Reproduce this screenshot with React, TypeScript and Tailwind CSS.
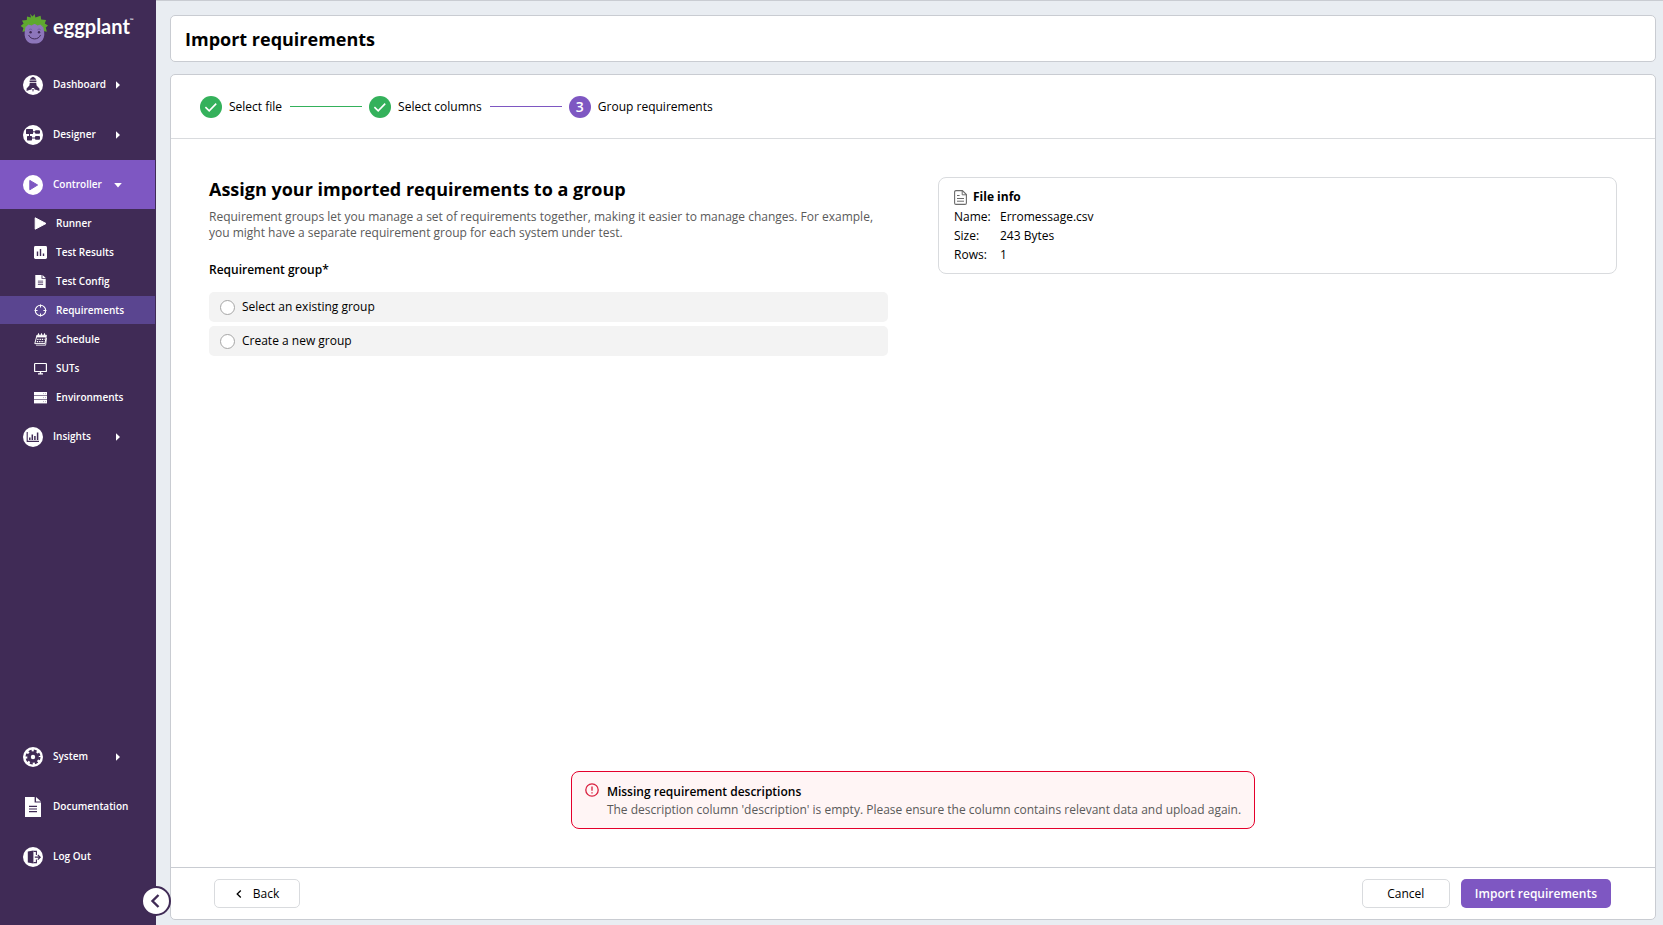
import { useState, type ReactNode } from "react";

interface IPropsIcon {
  className?: string;
}

interface INavItem {
  label: string;
  icon: ReactNode;
  arrow?: boolean;
}

interface IPropsStep {
  label: string;
  children: ReactNode;
  color: string;
}

function Logo() {
  return (
    <svg viewBox="0 0 28 31" className="h-[31px] w-7" aria-hidden="true">
      <path
        d="M10 0.8 L12.6 3.4 L14.6 1 L15.4 4.4 L20.6 2.8 L21.2 6.6 L26 7 L24.8 10.6 L28 12.4 L25.8 14.6 L26.8 18.8 L23.2 18 L14 11 L5.6 18 L2.4 19 L3.4 15 L0.7 13 L3.6 10.6 L2 7.4 L6.8 7 L7 3.6 L11 4.6 Z"
        fill="#5fa82f"
      />
      <path d="M5.2 16 C5.2 12 8 10.4 11 10.8 C13 11 16 11 18 10.8 C21 10.4 23.6 12 23.6 16 C24.8 20 24.6 24 22.6 27 C20.6 30 17.6 30.6 14.4 30.6 C11 30.6 8 30 6.2 27 C4.4 24 4.2 20 5.2 16 Z" fill="#8d76bb" />
      <path d="M5.4 14.6 L7 9.4 H21.6 L23.4 14.6 L20.4 11.6 L17.6 12.6 L14.6 10.8 L11.6 12.6 L8.4 11.4 Z" fill="#5fa82f" />
      <path d="M8.8 17 C9.6 15.8 11.4 15.8 12.2 17 M17.4 17 C18.2 15.8 20 15.8 20.8 17" fill="none" stroke="#6a539c" strokeWidth="0.8" />
      <circle cx="10.6" cy="19.2" r="1.2" fill="#402b56" />
      <circle cx="19" cy="19.2" r="1.2" fill="#402b56" />
      <path d="M8.8 22.4 C10.8 27.2 18.4 27.2 20.4 22.4" fill="none" stroke="#402b56" strokeWidth="1" strokeLinecap="round" />
    </svg>
  );
}

function DashboardIcon() {
  return (
    <svg viewBox="0 0 20 20" className="size-5" aria-hidden="true">
      <circle cx="10" cy="10" r="10" fill="#fff" />
      <path d="M10 1.8 C8.6 2.5 7.2 3.6 6.8 4.8 H13.2 C12.8 3.6 11.4 2.5 10 1.8 Z M6.6 5.6 H13.4 V7 H6.6 Z M6.8 7.8 H13.2 L13.6 10.4 L16.4 13.6 V16 L13 14.8 H11.8 L11 13 H9 L8.2 14.8 H7 L3.6 16 V13.6 L6.4 10.4 Z" fill="#402b56" />
      <path d="M9.3 14 H10.7 L10.4 16.6 H9.6 Z" fill="#402b56" />
    </svg>
  );
}

function DesignerIcon() {
  return (
    <svg viewBox="0 0 20 20" className="size-5" aria-hidden="true">
      <circle cx="10" cy="10" r="10" fill="#fff" />
      <path d="M6.5 8 V12 M9 6.8 H12 M9 13 H12" stroke="#402b56" strokeWidth="1" />
      <g fill="#402b56">
        <rect x="3" y="4" width="7" height="5" rx="0.6" />
        <rect x="12" y="5.2" width="5" height="3.6" rx="1" />
        <rect x="4" y="11" width="5" height="4.4" rx="0.6" />
        <rect x="12" y="11" width="5" height="3.8" rx="1" />
      </g>
    </svg>
  );
}

function ControllerIcon() {
  return (
    <svg viewBox="0 0 20 20" className="size-5" aria-hidden="true">
      <circle cx="10" cy="10" r="10" fill="#fff" />
      <path d="M6.8 5.4 L14.6 10 L6.8 14.8 Z" fill="#7e57c2" stroke="#7e57c2" strokeLinejoin="round" />
    </svg>
  );
}

function InsightsIcon() {
  return (
    <svg viewBox="0 0 20 20" className="size-5" aria-hidden="true">
      <circle cx="10" cy="10" r="10" fill="#fff" />
      <path d="M4.2 5 V14.4 H16" fill="none" stroke="#402b56" strokeWidth="1.1" />
      <path d="M6.8 13 V10.4 M9.3 13 V7.6 M11.9 13 V9 M14.6 13 V5.6" stroke="#402b56" strokeWidth="1.5" />
    </svg>
  );
}

function SystemIcon() {
  return (
    <svg viewBox="0 0 20 20" className="size-5" aria-hidden="true">
      <circle cx="10" cy="10" r="10" fill="#fff" />
      <circle cx="10" cy="10" r="5.8" fill="#402b56" />
      <circle cx="10" cy="10" r="6.4" fill="none" stroke="#402b56" strokeWidth="2.2" strokeDasharray="2.9 2.13" />
      <circle cx="10" cy="10" r="2.2" fill="#fff" />
    </svg>
  );
}

function DocumentIcon({ className }: IPropsIcon) {
  return (
    <svg viewBox="0 0 16 20" className={className} aria-hidden="true">
      <path d="M0 0 H9.6 V5.6 H16 V20 H0 Z" fill="#fff" />
      <path d="M11 0 L16 4.6 H11 Z" fill="#fff" />
      <path d="M4 9.4 H12 M4 12 H12 M4 14.6 H12" stroke="#402b56" strokeWidth="1.2" />
    </svg>
  );
}

function LogOutIcon() {
  return (
    <svg viewBox="0 0 20 20" className="size-5" aria-hidden="true">
      <circle cx="10" cy="10" r="10" fill="#fff" />
      <path d="M4.8 4.4 L10.4 3.6 V16.6 L4.8 15.6 Z" fill="#402b56" />
      <path d="M10.4 4.4 H13.4 V8 M13.4 12.4 V15.6 H10.4" fill="none" stroke="#402b56" strokeWidth="1.1" />
      <path d="M11.8 10.2 H16.8 M14.8 7.8 L17.2 10.2 L14.8 12.6" fill="none" stroke="#402b56" strokeWidth="1.2" />
    </svg>
  );
}

function RunnerIcon() {
  return (
    <svg viewBox="0 0 13 13" className="size-[13px]" aria-hidden="true">
      <path d="M1.2 0.8 L12 6.5 L1.2 12.2 Z" fill="#fff" stroke="#fff" strokeLinejoin="round" />
    </svg>
  );
}

function ResultsIcon() {
  return (
    <svg viewBox="0 0 13 13" className="size-[13px]" aria-hidden="true">
      <rect width="13" height="13" rx="1.4" fill="#fff" />
      <path d="M3.5 10 V5.4 M6.5 10 V3 M9.5 10 V7.6" stroke="#402b56" strokeWidth="1.4" />
    </svg>
  );
}

function RequirementsIcon() {
  return (
    <svg viewBox="0 0 13 13" className="size-[13px]" fill="none" stroke="#fff" aria-hidden="true">
      <circle cx="6.5" cy="6.5" r="5.2" strokeWidth="1.1" />
      <path d="M6.5 0.6 V3.6 M6.5 9.4 V12.4 M0.6 6.5 H3.6 M9.4 6.5 H12.4" strokeWidth="1.1" />
    </svg>
  );
}

function ScheduleIcon() {
  return (
    <svg viewBox="0 0 13 13" className="size-[13px]" fill="none" stroke="#fff" aria-hidden="true">
      <path d="M3 2.2 H12.4 L11 10.6 H0.8 Z" strokeWidth="1" />
      <path d="M2.6 3.4 H12" strokeWidth="2" />
      <path d="M4.5 0.3 V2.4 M7.5 0.3 V2.4 M10.5 0.3 V2.4" strokeWidth="1" />
      <path d="M3.2 6.4 H10.6 M2.8 8.6 H10.2" strokeWidth="1.2" strokeDasharray="1.4 0.9" />
      <path d="M2 12.2 H11.6 L12.6 5" strokeWidth="0.8" />
    </svg>
  );
}

function SutsIcon() {
  return (
    <svg viewBox="0 0 13 13" className="size-[13px]" fill="none" stroke="#fff" aria-hidden="true">
      <rect x="0.6" y="1.5" width="11.8" height="8" rx="0.6" strokeWidth="1.2" />
      <path d="M4 11.9 H9 M6.5 9.5 V12" strokeWidth="1.4" />
    </svg>
  );
}

function EnvironmentsIcon() {
  return (
    <svg viewBox="0 0 13 13" className="size-[13px]" fill="#fff" aria-hidden="true">
      <rect y="1" width="13" height="3.4" />
      <rect y="5" width="13" height="3.4" />
      <rect y="9" width="13" height="3.4" />
      <path d="M9 2.6 H9.6 M11 2.6 H11.6 M9 6.6 H9.6 M11 6.6 H11.6 M9 10.6 H9.6 M11 10.6 H11.6" stroke="#402b56" strokeWidth="0.6" />
    </svg>
  );
}

function FileIcon() {
  return (
    <svg viewBox="0 0 13 15" className="h-[15px] w-[13px]" fill="none" stroke="#6b6b6b" aria-hidden="true">
      <path d="M8.4 0.6 H2 C1.2 0.6 0.6 1.2 0.6 2 V13 C0.6 13.8 1.2 14.4 2 14.4 H11 C11.8 14.4 12.4 13.8 12.4 13 V4.6 Z" strokeWidth="1.1" />
      <path d="M8.2 0.8 V4.8 H12.2" strokeWidth="1" />
      <path d="M3 5.5 H5.6 M3 8.5 H10 M3 11.2 H10" strokeWidth="1" />
    </svg>
  );
}

function CheckCircle() {
  return (
    <svg viewBox="0 0 22 22" className="size-[22px]" aria-hidden="true">
      <circle cx="11" cy="11" r="11" fill="#34b15b" />
      <path d="M5.4 11.2 L9.2 14.8 L16.2 7.6" fill="none" stroke="#fff" strokeWidth="1.6" />
    </svg>
  );
}

const subItems: INavItem[] = [
  { label: "Runner", icon: <RunnerIcon /> },
  { label: "Test Results", icon: <ResultsIcon /> },
  { label: "Test Config", icon: <DocumentIcon className="h-[13px] w-[11px]" /> },
  { label: "Requirements", icon: <RequirementsIcon /> },
  { label: "Schedule", icon: <ScheduleIcon /> },
  { label: "SUTs", icon: <SutsIcon /> },
  { label: "Environments", icon: <EnvironmentsIcon /> },
];

const bottomItems: INavItem[] = [
  { label: "System", icon: <SystemIcon />, arrow: true },
  { label: "Documentation", icon: <DocumentIcon className="h-5 w-4" /> },
  { label: "Log Out", icon: <LogOutIcon /> },
];

function NavLink({ item, active }: { item: INavItem; active?: boolean }) {
  return (
    <a
      href="#"
      className={`flex h-[49px] items-center pl-[23px] text-[10px] font-semibold ${active ? "bg-[#7e57c2]" : ""}`}
    >
      <span className="flex w-5 justify-center">{item.icon}</span>
      <span className={`ml-[10px] ${item.arrow ? "w-[61px]" : ""}`}>{item.label}</span>
      {item.arrow && (
        <svg viewBox="0 0 8 8" className="size-2" fill="#fff" aria-hidden="true">
          {active ? <path d="M0.2 2 H7.8 L4 6.4 Z" /> : <path d="M2 0.2 V7.8 L6 4 Z" />}
        </svg>
      )}
    </a>
  );
}

function Sidebar() {
  return (
    <aside className="relative flex w-[156px] shrink-0 flex-col bg-[#402b56] text-white">
      <a href="#" className="flex h-[60px] items-start gap-[5px] pt-[13px] pl-5">
        <Logo />
        <span className="flex font-[Lato] text-[20px] leading-[26px] font-bold">
          eggplant
          <span className="text-[5px] leading-[14px]">™</span>
        </span>
      </a>
      <nav className="flex grow flex-col justify-between pb-11">
        <ul className="flex flex-col gap-px">
          <li>
            <NavLink item={{ label: "Dashboard", icon: <DashboardIcon />, arrow: true }} />
          </li>
          <li>
            <NavLink item={{ label: "Designer", icon: <DesignerIcon />, arrow: true }} />
          </li>
          <li className="pr-px">
            <NavLink item={{ label: "Controller", icon: <ControllerIcon />, arrow: true }} active />
            <ul className="flex flex-col gap-px">
              {subItems.map((item) => (
                <li key={item.label}>
                  <a
                    href="#"
                    className={`flex h-7 items-center gap-[9px] pl-[34px] text-[10px] font-semibold ${item.label === "Requirements" ? "bg-[#5a4590]" : ""}`}
                  >
                    <span className="flex w-[13px] justify-center">{item.icon}</span>
                    {item.label}
                  </a>
                </li>
              ))}
            </ul>
          </li>
          <li>
            <NavLink item={{ label: "Insights", icon: <InsightsIcon />, arrow: true }} />
          </li>
        </ul>
        <ul className="flex flex-col gap-px">
          {bottomItems.map((item) => (
            <li key={item.label}>
              <NavLink item={item} />
            </li>
          ))}
        </ul>
      </nav>
      <button
        aria-label="Collapse menu"
        className="absolute -right-[15px] bottom-[9px] flex size-[30px] cursor-pointer items-center justify-center rounded-full border-2 border-[#402b56] bg-white"
      >
        <svg viewBox="0 0 14 14" className="size-[14px]" fill="none" stroke="#402b56" strokeWidth="2.4" aria-hidden="true">
          <path d="M9.5 1 L3.5 7 L9.5 13" />
        </svg>
      </button>
    </aside>
  );
}

function Step({ label, children, color }: IPropsStep) {
  return (
    <li className="flex items-center gap-[7px]">
      {color && <span className={`h-px w-[72px] ${color}`} />}
      {children}
      <span>{label}</span>
    </li>
  );
}

export default function App() {
  const [group, setGroup] = useState<string>("");

  return (
    <div className="flex min-h-screen bg-[#e9edf2] font-['Open_Sans',sans-serif] text-[12px] text-black">
      <Sidebar />
      <main className="flex min-w-0 grow flex-col gap-3 border-t border-[#c9ccd2] pt-[14px] pr-[7px] pb-[5px] pl-[14px]">
        <header className="rounded-[5px] border border-[#c9ccd2] bg-white px-[14px] pt-[11px] pb-[10px]">
          <h1 className="text-[18px] leading-6 font-bold">Import requirements</h1>
        </header>

        <section className="flex grow flex-col rounded-[5px] border border-[#c9ccd2] bg-white">
          <ol className="flex h-16 items-center gap-2 border-b border-[#d9dbde] px-[29px]">
            <Step label="Select file" color="">
              <CheckCircle />
            </Step>
            <Step label="Select columns" color="bg-[#34b15b]">
              <CheckCircle />
            </Step>
            <Step label="Group requirements" color="bg-[#7e57c2]">
              <span className="flex size-[22px] items-center justify-center rounded-full bg-[#7e57c2] text-[14px] font-semibold text-white">
                3
              </span>
            </Step>
          </ol>

          <div className="grid grid-cols-2 items-start gap-[50px] px-[38px] pt-[38px]">
            <div>
              <h2 className="text-[18px] leading-6 font-bold">Assign your imported requirements to a group</h2>
              <p className="mt-2 leading-4 text-[#5a5a5a]">
                Requirement groups let you manage a set of requirements together, making it easier to manage changes.
                For example, you might have a separate requirement group for each system under test.
              </p>
              <fieldset className="mt-[19px]">
                <legend className="leading-5 font-semibold">Requirement group*</legend>
                <div className="mt-3 flex flex-col gap-1">
                  {["Select an existing group", "Create a new group"].map((option) => (
                    <label key={option} className="flex h-[30px] items-center gap-[7px] rounded-[5px] bg-[#f3f3f3] px-[11px]">
                      <input
                        type="radio"
                        name="group"
                        checked={group === option}
                        onChange={() => setGroup(option)}
                        className="size-[15px] appearance-none rounded-full border border-[#a6a6a6] bg-white checked:border-4 checked:border-[#7e57c2]"
                      />
                      {option}
                    </label>
                  ))}
                </div>
              </fieldset>
            </div>

            <div className="rounded-lg border border-[#d9dbde] px-[15px] pt-[9px] pb-[9px]">
              <h3 className="flex items-center gap-[6px] leading-5 font-bold">
                <FileIcon />
                File info
              </h3>
              <dl className="grid grid-cols-[46px_1fr] leading-[19px]">
                <dt>Name:</dt>
                <dd>Erromessage.csv</dd>
                <dt>Size:</dt>
                <dd>243 Bytes</dd>
                <dt>Rows:</dt>
                <dd>1</dd>
              </dl>
            </div>
          </div>

          <div role="alert" className="mx-auto mt-auto mb-[38px] flex gap-2 rounded-lg border border-[#e4002b] bg-[#fff5f5] px-[13px] pt-[11px] pb-[9px]">
            <svg viewBox="0 0 14 14" className="size-[14px]" fill="none" stroke="#d9203f" aria-hidden="true">
              <circle cx="7" cy="7" r="6.2" strokeWidth="1.3" />
              <path d="M7 3.6 V7.8 M7 9.2 V10.4" strokeWidth="1.3" />
            </svg>
            <div className="leading-[18px]">
              <p className="font-semibold">Missing requirement descriptions</p>
              <p className="text-[#5a5a5a]">
                The description column 'description' is empty. Please ensure the column contains relevant data and
                upload again.
              </p>
            </div>
          </div>

          <footer className="flex h-[52px] items-center gap-[11px] border-t border-[#c9ccd2] pr-11 pl-[43px]">
            <button className="mr-auto flex h-[29px] w-[86px] items-center justify-center gap-[10px] rounded-[5px] border border-[#d9dbde] font-medium">
              <svg viewBox="0 0 8 8" className="size-2" fill="none" stroke="#000" strokeWidth="1.3" aria-hidden="true">
                <path d="M5.8 0.5 L2.2 4 L5.8 7.5" />
              </svg>
              Back
            </button>
            <button className="h-[29px] w-[88px] rounded-[5px] border border-[#d9dbde] font-medium">Cancel</button>
            <button className="h-[29px] rounded-[5px] bg-[#7e57c2] px-[14px] font-semibold text-white">
              Import requirements
            </button>
          </footer>
        </section>
      </main>
    </div>
  );
}
